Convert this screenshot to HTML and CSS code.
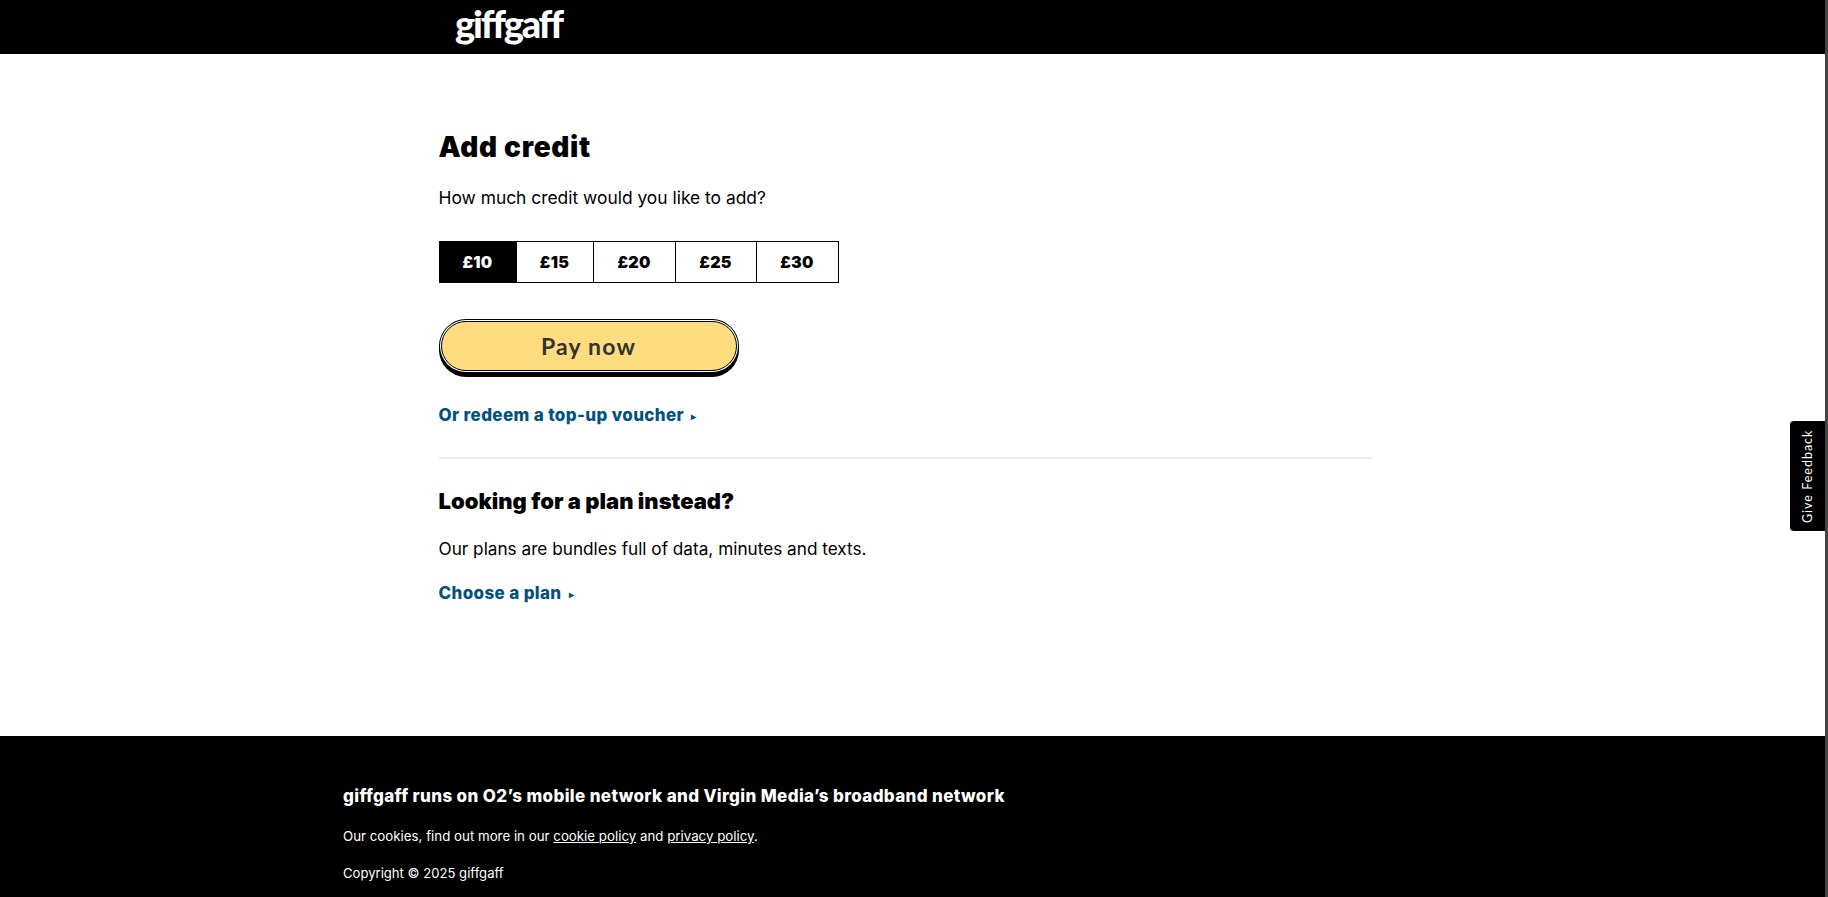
FILE: index.html
```html
<!DOCTYPE html>
<html lang="en">
<head>
    <meta charset="UTF-8">
    <meta name="viewport" content="width=device-width, initial-scale=1.0">
    <title>Add credit</title>
    <link rel="stylesheet" href="styles.css">
</head>
<body>
    <div class="page">
        <header class="top-bar">
            <div class="top-bar-inner">
                <a class="logo" href="#">giffgaff</a>
            </div>
        </header>

        <main class="container">
            <h1>Add credit</h1>
            <p class="lead">How much credit would you like to add?</p>

            <div class="amounts">
                <button class="amount selected">£10</button>
                <button class="amount">£15</button>
                <button class="amount">£20</button>
                <button class="amount">£25</button>
                <button class="amount">£30</button>
            </div>

            <button class="pay-btn">Pay now</button>

            <a class="action-link voucher" href="#">Or redeem a top-up voucher <span class="arrow">▸</span></a>

            <hr class="divider">

            <h2>Looking for a plan instead?</h2>
            <p class="plans-text">Our plans are bundles full of data, minutes and texts.</p>
            <a class="action-link" href="#">Choose a plan <span class="arrow">▸</span></a>
        </main>

        <footer class="footer">
            <div class="footer-inner">
                <p class="footer-title">giffgaff runs on O2’s mobile network and Virgin Media’s broadband network</p>
                <p class="footer-text">Our cookies, find out more in our <a href="#">cookie policy</a> and <a href="#">privacy policy</a>.</p>
                <p class="footer-text copyright">Copyright © 2025 giffgaff</p>
            </div>
        </footer>
    </div>

    <!-- feedback tab -->
    <a class="feedback" href="#">Give Feedback</a>
</body>
</html>
```

FILE: styles.css
```css
html, body {
    height: 100%;
}
body {
    margin: 0;
    font-family: Inter, Arial, sans-serif;
    font-weight: 400;
    color: #000;
    background: #fff;
    border-right: 3px solid #444;
    box-sizing: border-box;
    overflow: hidden;
}
.page {
    display: flex;
    flex-direction: column;
    height: 897px;
}
.top-bar {
    background: #000;
    height: 54px;
    flex: none;
}
.top-bar-inner {
    width: 934px;
    margin-left: 439px;
    padding-left: 16px;
}
.logo {
    color: #fff;
    font-family: Lato, sans-serif;
    font-weight: 900;
    font-size: 38px;
    line-height: 46px;
    letter-spacing: -2.2px;
    text-decoration: none;
}
.container {
    flex: 1;
    width: 933px;
    margin-left: 438.5px;
    padding-top: 73px;
}
h1 {
    margin: 0;
    font-family: Inter, sans-serif;
    font-weight: 900;
    font-size: 28px;
    line-height: 40px;
    letter-spacing: .7px;
}
.lead {
    margin: 18px 0 0;
    font-size: 17.4px;
    line-height: 26px;
}
.amounts {
    display: flex;
    margin-top: 30px;
    width: max-content;
    border: 1px solid #000;
}
.amount {
    height: 40px;
    width: 82px;
    padding: 0;
    border: 0;
    border-left: 1px solid #000;
    background: #fff;
    color: #000;
    font-family: Inter, sans-serif;
    font-weight: 900;
    font-size: 16px;
    letter-spacing: .3px;
}
.amount:nth-child(1) {
    width: 76px;
    border-left: 0;
}
.amount:nth-child(2) {
    width: 77px;
}
.amount:nth-child(4) {
    width: 81px;
}
.amount.selected {
    background: #000;
    color: #fff;
}
.pay-btn {
    display: block;
    width: 296px;
    height: 50px;
    margin: 38px 0 0 2px;
    border: 1px solid #000;
    border-radius: 25px;
    box-shadow: 0 0 0 1px #fff, 0 0 0 2px #000, 0 4px 0 2px #000;
    background: #ffdd7f;
    color: #333;
    font-family: Lato, sans-serif;
    font-weight: 700;
    font-size: 23px;
    letter-spacing: 1.2px;
}
.action-link {
    display: block;
    color: #00527f;
    font-family: Inter, sans-serif;
    font-weight: 800;
    font-size: 17px;
    line-height: 24px;
    letter-spacing: .36px;
    text-decoration: none;
}
.voucher {
    margin-top: 32px;
}
.arrow {
    margin-left: 3px;
    font-size: 10px;
    vertical-align: 1px;
}
.divider {
    margin: 29px 0 0;
    border: 0;
    border-top: 2px solid #eee;
}
h2 {
    margin: 27px 0 0;
    font-family: Inter, sans-serif;
    font-weight: 900;
    font-size: 22px;
    line-height: 30px;
}
.plans-text {
    margin: 20px 0 0;
    font-size: 17.2px;
    line-height: 26px;
}
.plans-text + .action-link {
    margin-top: 19px;
}
.footer {
    background: #000;
    color: #fff;
    height: 161px;
    flex: none;
}
.footer-inner {
    margin-left: 343px;
    padding-top: 48px;
}
.footer-title {
    margin: 0;
    font-family: Inter, sans-serif;
    font-weight: 800;
    font-size: 17px;
    line-height: 24px;
    letter-spacing: .36px;
}
.footer-text {
    margin: 18px 0 0;
    font-size: 13.3px;
    line-height: 20px;
}
.footer-text.copyright {
    margin-top: 17px;
    font-size: 13.1px;
}
.footer-text a {
    color: #fff;
}
.feedback {
    position: absolute;
    right: 3px;
    top: 421px;
    width: 35px;
    height: 110px;
    display: flex;
    align-items: center;
    justify-content: center;
    background: #000;
    color: #fff;
    font-family: Lato, sans-serif;
    font-weight: 400;
    font-size: 12.5px;
    letter-spacing: 1px;
    text-decoration: none;
    writing-mode: vertical-rl;
    transform: rotate(180deg);
    border-radius: 0 4px 4px 0;
}
```
